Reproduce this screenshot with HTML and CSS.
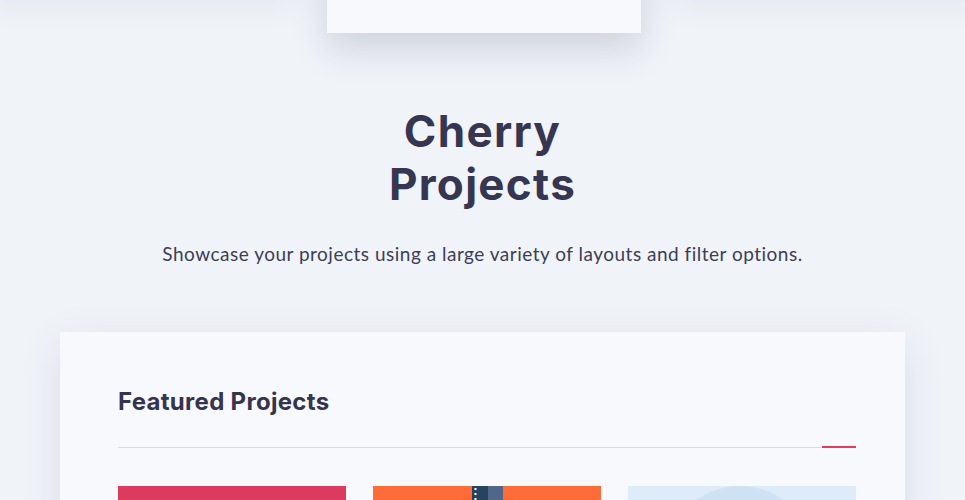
FILE: index.html
```html
<!DOCTYPE html>
<html lang="en">
<head>
<meta charset="utf-8">
<title>Cherry Projects</title>
<link rel="stylesheet" href="styles.css">
</head>
<body>
<div class="top-row">
  <div class="tcard tcard-side"></div>
  <div class="tcard tcard-main"></div>
  <div class="tcard tcard-side"></div>
</div>

<section class="intro">
  <h1 class="title">Cherry<br>Projects</h1>
  <p class="lead">Showcase your projects using a large variety of layouts and filter options.</p>
</section>

<section class="panel">
  <h2 class="panel-title">Featured Projects</h2>
  <div class="divider"><span class="divider-accent"></span></div>
  <div class="grid">
    <div class="thumb thumb-red"></div>
    <div class="thumb thumb-orange">
      <svg class="art" viewBox="0 0 228 60" preserveAspectRatio="none" width="228" height="60">
        <circle cx="114" cy="110" r="100" fill="#ff6531"/>
        <rect x="99" y="0" width="16" height="60" fill="#27435f"/>
        <rect x="115" y="0" width="15" height="60" fill="#51678a"/>
        <rect x="101.5" y="2" width="2" height="2" fill="#fff"/>
        <rect x="101.5" y="7" width="2" height="2" fill="#fff"/>
        <rect x="101.5" y="12" width="2" height="2" fill="#fff"/>
      </svg>
    </div>
    <div class="thumb thumb-blue">
      <svg class="art" viewBox="0 0 228 60" preserveAspectRatio="none" width="228" height="60">
        <circle cx="112" cy="75" r="75" fill="#cfe2f3"/>
      </svg>
    </div>
  </div>
</section>
</body>
</html>
```

FILE: styles.css
```css
html, body {
  margin: 0;
  padding: 0;
}
body {
  background: #f0f3f8;
  font-family: "Inter", "Liberation Sans", sans-serif;
  color: #373752;
  overflow: hidden;
  height: 500px;
}
.top-row {
  display: flex;
  justify-content: center;
  align-items: flex-start;
  gap: 30px;
  margin-top: -200px;
  padding-left: 2px;
}
.tcard {
  width: 314px;
  background: #f8f9fc;
  flex: none;
}
.tcard-main {
  height: 233px;
  box-shadow: 0 16px 34px rgba(40, 45, 75, 0.16);
}
.tcard-side {
  height: 185px;
  box-shadow: 0 16px 34px rgba(40, 45, 75, 0.08);
}
.intro {
  text-align: center;
  margin-top: 72px;
}
.title {
  margin: 0;
  font-size: 44px;
  line-height: 53px;
  font-weight: 700;
  letter-spacing: 1.3px;
  color: #363651;
}
.lead {
  margin: 29px 0 0;
  font-family: "Lato", "Liberation Sans", sans-serif;
  font-weight: 400;
  font-size: 19px;
  line-height: 27px;
  letter-spacing: 0.5px;
  color: #3d3d57;
}
.panel {
  margin: 65px 60px 0 60px;
  background: #f8f9fc;
  box-shadow: 0 10px 40px rgba(40, 45, 75, 0.10);
  padding: 55px 49px 0 58px;
  height: 300px;
}
.panel-title {
  margin: 0;
  font-size: 24px;
  line-height: 29px;
  font-weight: 700;
  letter-spacing: 0.3px;
  color: #35344f;
}
.divider {
  margin-top: 31px;
  height: 1px;
  background: #d9dce3;
  position: relative;
}
.divider-accent {
  position: absolute;
  right: 0;
  top: -1px;
  width: 34px;
  height: 2px;
  background: #e23c60;
}
.grid {
  margin-top: 38px;
  display: grid;
  grid-template-columns: repeat(3, 228px);
  gap: 27px;
}
.thumb {
  height: 60px;
  overflow: hidden;
}
.art {
  display: block;
}
.thumb-red {
  background: #dc3a5f;
}
.thumb-orange {
  background: #ff6c37;
}
.thumb-blue {
  background: #deebf8;
}
```
